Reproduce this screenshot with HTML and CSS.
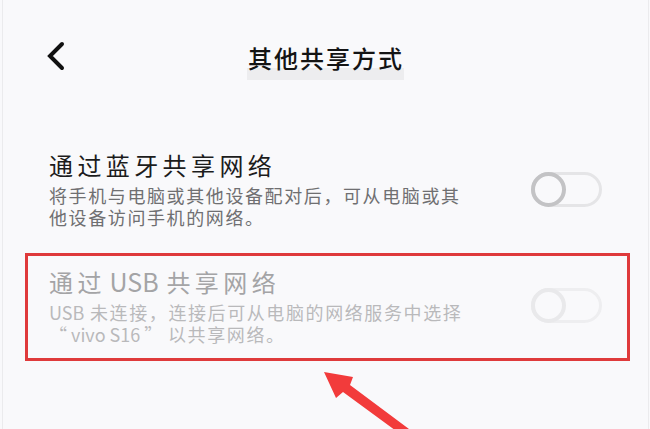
FILE: index.html
```html
<!DOCTYPE html>
<html lang="zh-CN">
<head>
<meta charset="utf-8">
<title>其他共享方式</title>
<link rel="stylesheet" href="styles.css">
</head>
<body>
<div class="page">
  <header class="topbar">
    <span class="back">
      <svg width="20" height="30" viewBox="0 0 20 30" aria-hidden="true">
        <path d="M17 3 L5 15 L17 27" fill="none" stroke="#111" stroke-width="4" stroke-linecap="round" stroke-linejoin="miter"/>
      </svg>
    </span>
    <h1 class="title">其他共享方式</h1>
    <span></span>
  </header>

  <section class="list">
    <div class="item">
      <div class="text">
        <div class="item-title">通过蓝牙共享网络</div>
        <div class="item-desc">
          <div class="line">将手机与电脑或其他设备配对后，可从电脑或其</div>
          <div class="line">他设备访问手机的网络。</div>
        </div>
      </div>
      <span class="switch"><span class="knob"></span></span>
    </div>

    <div class="item disabled marked">
      <div class="text">
        <div class="item-title">通过 <span class="latin">USB</span> 共享网络</div>
        <div class="item-desc">
          <div class="line"><span class="latin">USB</span> 未连接，连接后可从电脑的网络服务中选择</div>
          <div class="line"><span class="latin">“ vivo S16 ”</span> 以共享网络。</div>
        </div>
      </div>
      <span class="switch"><span class="knob"></span></span>
    </div>
  </section>

  <svg class="arrow" width="650" height="429" viewBox="0 0 650 429" aria-hidden="true">
    <polygon points="323,372 335,398 342,392 402,436 408,429 349,385 352,377" fill="#f23b3b"/>
  </svg>
</div>
</body>
</html>
```

FILE: styles.css
```css
* { box-sizing: border-box; }

html, body {
  margin: 0;
  padding: 0;
  background: #f9f9fb;
}

body {
  font-family: "Noto Sans CJK SC", "Noto Sans", sans-serif;
  width: 650px;
  height: 429px;
  overflow: hidden;
}

.page {
  position: relative;
  height: 429px;
  margin-left: 2px;
  width: 647px;
  border-left: 1px solid #ebebed;
  border-right: 1px solid #ebebed;
}

.topbar {
  display: grid;
  grid-template-columns: 1fr auto 1fr;
  align-items: start;
  padding-top: 43px;
  height: 137px;
}

.back {
  padding-left: 42px;
  margin-top: -2px;
  display: flex;
}

.title {
  margin: 0;
  font-size: 24px;
  line-height: 30px;
  font-weight: 500;
  color: #141414;
  letter-spacing: 2px;
  padding-bottom: 7px;
  padding-left: 1px;
  background: linear-gradient(to bottom, transparent 25px, #ededef 25px);
}

.list {
  display: flex;
  flex-direction: column;
  gap: 9px;
  margin-left: 22px;
  margin-right: 18px;
}

.item {
  display: flex;
  align-items: center;
  justify-content: space-between;
  border: 3px solid transparent;
  padding: 10px 25px 13px 21px;
}

.item.marked {
  border-color: #df3a3b;
}

.item-title {
  font-size: 24px;
  line-height: 30px;
  color: #1c1c1c;
  letter-spacing: 4.4px;
}

.item-desc {
  margin-top: 4px;
  font-size: 18px;
  line-height: 22px;
  color: #6f6f71;
  letter-spacing: 1.6px;
}

.line {
  height: 22px;
}

.latin {
  letter-spacing: 0;
}

.item-title .latin {
  font-size: 25px;
  margin-right: 4px;
}

.disabled .item-title {
  color: #a4a4a6;
  word-spacing: -6px;
}

.disabled .item-desc { color: #b9b9bb; }

.switch {
  position: relative;
  width: 71px;
  height: 35px;
  border: 3px solid #e5e5e7;
  border-radius: 18px;
  flex: none;
}

.knob {
  position: absolute;
  left: -3px;
  top: -3px;
  width: 35px;
  height: 35px;
  border: 4px solid #c3c3c5;
  border-radius: 50%;
  background: #f9f9fb;
}

.disabled .switch { border-color: #eeeef0; }
.disabled .knob { border-color: #e9e9eb; }

.arrow {
  position: absolute;
  left: -2px;
  top: 0;
  pointer-events: none;
}
```
